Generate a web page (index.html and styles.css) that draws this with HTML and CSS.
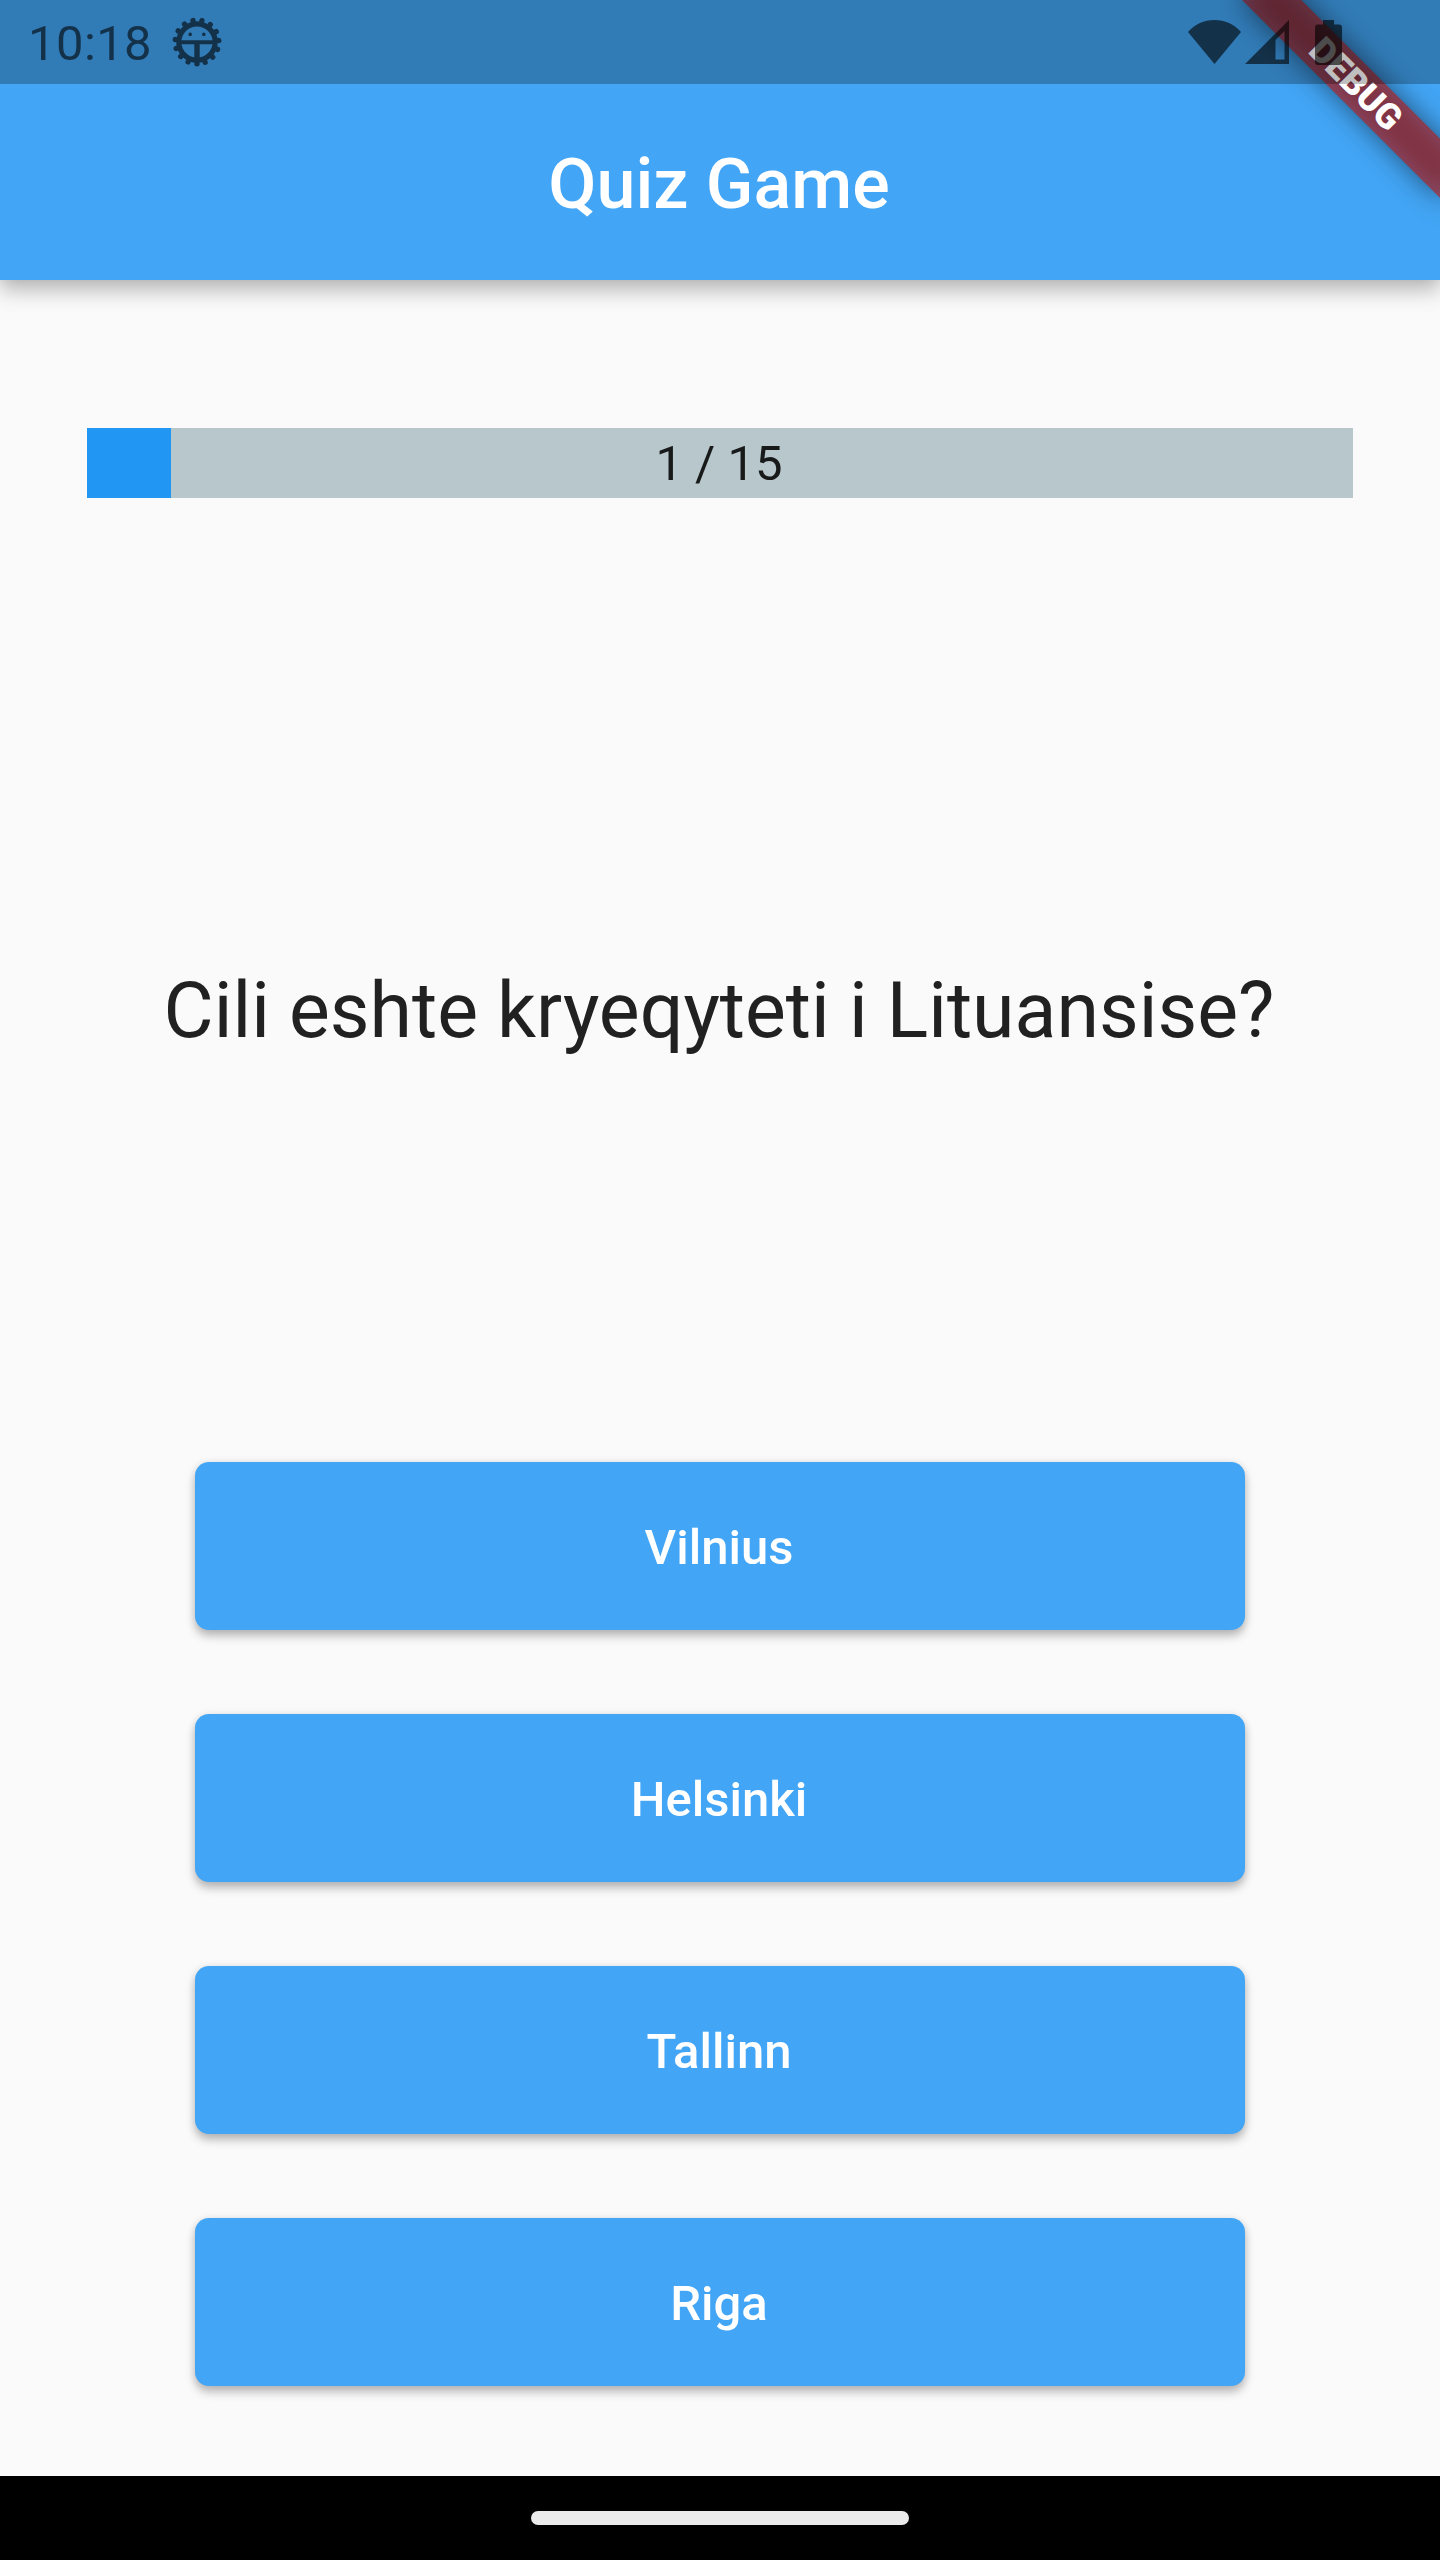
FILE: index.html
```html
<!DOCTYPE html>
<html lang="sq">
<head>
<meta charset="utf-8">
<title>Quiz Game</title>
<link rel="stylesheet" href="styles.css">
</head>
<body>
<div class="screen">
  <header class="app-bar">
    <h1 class="app-title">Quiz Game</h1>
  </header>

  <main class="quiz">
    <div class="progress">
      <div class="progress-fill" style="width: 6.6667%"></div>
      <span class="progress-label">1 / 15</span>
    </div>
    <p class="question">Cili eshte kryeqyteti i Lituansise?</p>
    <div class="answers">
      <button class="answer">Vilnius</button>
      <button class="answer">Helsinki</button>
      <button class="answer">Tallinn</button>
      <button class="answer">Riga</button>
    </div>
  </main>

  <footer class="nav-bar"><div class="nav-handle"></div></footer>

  <div class="banner">
    <div class="banner-shadow"></div>
    <div class="banner-strip">DEBUG</div>
  </div>

  <div class="status-bar">
    <div class="status-group">
      <span class="clock">10:18</span>
      <svg class="bug" width="50" height="50" viewBox="-25 -25 50 50">
        <g opacity=".6">
          <circle r="18.2" fill="none" stroke="#000" stroke-width="5.2"/>
          <circle r="21.8" fill="none" stroke="#000" stroke-width="5.4" stroke-linecap="round" stroke-dasharray="0.01 9.121" transform="rotate(90)"/>
          <path d="M-17-1.800H17V2.200H2.700V18H-2.700V2.200H-17Z"/>
          <circle cx="-6.8" cy="-7.6" r="1.8"/>
          <circle cx="6.8" cy="-7.6" r="1.8"/>
        </g>
      </svg>
    </div>
    <div class="status-group">
      <svg width="53" height="44" viewBox="0 0 53 44"><path d="M0 12C7 4 16 0 26.500 0S46 4 53 12L26.500 44Z" fill="currentColor"/></svg>
      <svg class="signal" width="44" height="44" viewBox="0 0 44 44"><path d="M44 0V44H0ZM39.500 11L30.500 20V39.500H39.500Z" fill="currentColor" fill-rule="evenodd"/></svg>
      <svg class="battery" width="27" height="45" viewBox="0 0 27 45"><path d="M8 0H19V4.500H24Q27 4.500 27 7.500V42Q27 45 24 45H3Q0 45 0 42V7.500Q0 4.500 3 4.500H8Z" fill="currentColor"/></svg>
    </div>
  </div>
</div>
</body>
</html>
```
FILE: styles.css
```css
* { box-sizing: border-box; }

body {
  margin: 0;
  font-family: Roboto, sans-serif;
}

.screen {
  position: relative;
  display: flex;
  flex-direction: column;
  width: 1440px;
  height: 2560px;
  overflow: hidden;
  background: #fafafa;
}

.app-bar {
  flex: none;
  display: flex;
  align-items: center;
  justify-content: center;
  height: 280px;
  padding: 88px 2px 0 0;
  background: #42a5f5;
  box-shadow: 0 10px 20px rgba(0, 0, 0, .27), 0 0 10px rgba(0, 0, 0, .06);
}

.app-title {
  margin: 0;
  color: #fff;
  font-size: 70px;
  font-weight: 500;
  line-height: 82px;
}

.quiz {
  flex: 1;
  display: flex;
  flex-direction: column;
  align-items: center;
  padding-top: 148px;
}

.progress {
  position: relative;
  display: flex;
  align-items: center;
  justify-content: center;
  width: 1266px;
  height: 70px;
  padding: 2px 2px 0 0;
  background: #b8c7cb;
}

.progress-fill {
  position: absolute;
  top: 0;
  left: 0;
  height: 100%;
  background: #2196f3;
}

.progress-label {
  color: rgba(0, 0, 0, .87);
  font-size: 49px;
  line-height: 58px;
}

.question {
  margin: 0;
  padding: 468px 2px 0 0;
  color: #212121;
  font-size: 77px;
  line-height: 90px;
  white-space: nowrap;
}

.answers {
  display: flex;
  flex-direction: column;
  gap: 84px;
  padding-top: 406px;
}

.answer {
  width: 1050px;
  height: 168px;
  padding: 3px 2px 0 0;
  border: 0;
  border-radius: 14px;
  background: #42a5f5;
  color: #fff;
  font: 500 49px/58px Roboto, sans-serif;
  box-shadow: 0 6px 10px rgba(0, 0, 0, .26), 0 0 9px rgba(0, 0, 0, .08);
}

.nav-bar {
  flex: none;
  display: flex;
  align-items: center;
  justify-content: center;
  height: 84px;
  background: #000;
}

.nav-handle {
  width: 378px;
  height: 14px;
  border-radius: 7px;
  background: #ebebeb;
}

.banner {
  position: absolute;
  top: 0;
  right: 0;
  width: 300px;
  height: 300px;
  overflow: hidden;
}

.banner-shadow,
.banner-strip {
  position: absolute;
  top: 98px;
  left: 160px;
  width: 280px;
  height: 42px;
  transform: rotate(45deg);
  transform-origin: 140px -98px;
}

.banner-shadow {
  background: rgba(0, 0, 0, .5);
  filter: blur(13.9px);
}

.banner-strip {
  background: rgba(183, 28, 28, .627);
  color: #fff;
  font-size: 35.7px;
  font-weight: 900;
  line-height: 42px;
  text-align: center;
}

.status-bar {
  position: absolute;
  top: 0;
  left: 0;
  display: flex;
  justify-content: space-between;
  width: 100%;
  height: 84px;
  padding: 0 98px 0 28px;
  background: rgba(0, 0, 0, .25);
  color: rgba(0, 0, 0, .6);
}

.status-group {
  display: flex;
  align-items: center;
}

.clock {
  width: 144px;
  padding-top: 4px;
  font-size: 49px;
  line-height: 58px;
  letter-spacing: .4px;
}

.signal { margin-left: 4px; }

.battery { margin-left: 26px; }
```
